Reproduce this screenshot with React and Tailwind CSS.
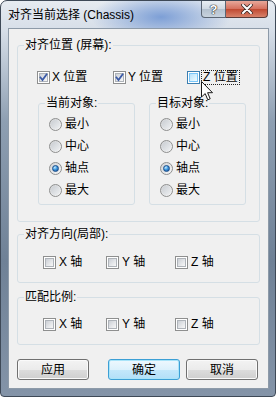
import React from 'react';

const FONT = "font-['Liberation_Sans','Noto_Sans_CJK_SC',sans-serif]";

function CheckBox({ checked, hot }) {
  const outer = hot ? 'border-[#3c7fb1]' : 'border-[#8e8f8f]';
  const inner = hot
    ? 'bg-[linear-gradient(135deg,#b9e2fb_0%,#d9f2fe_60%,#f0fbff_100%)] border-[#79c6f9]'
    : 'bg-[linear-gradient(135deg,#cbcfd5_0%,#e4e6e9_55%,#f7f7f7_100%)] border-[#aeb3b9]';
  return (
    <span className={`relative inline-flex h-[13px] w-[13px] shrink-0 items-center justify-center border ${outer} bg-white`}>
      <span className={`h-[9px] w-[9px] border ${inner}`} />
      {checked && (
        <svg className="absolute left-0 top-0" width="11" height="11" viewBox="0 0 11 11">
          <path d="M2.5 5.5 L4.5 8 L8.5 2.5" fill="none" stroke="#3b5aa6" strokeWidth="1.8" strokeLinecap="square" />
        </svg>
      )}
    </span>
  );
}

function Radio({ checked }) {
  return (
    <span className="inline-flex h-[13px] w-[13px] shrink-0 items-center justify-center rounded-full border border-[#8e8f8f] bg-[linear-gradient(135deg,#d0d2d5,#f8f8f8)]">
      {checked ? (
        <span className="h-[7px] w-[7px] rounded-full border border-[#1b4e8a] bg-[radial-gradient(circle_at_35%_30%,#c6ecff_0%,#3d98e0_45%,#15468a_100%)]" />
      ) : (
        <span className="h-[9px] w-[9px] rounded-full bg-[linear-gradient(135deg,#c9cdd2,#eef0f2)]" />
      )}
    </span>
  );
}

function Group({ label, className, children }) {
  return (
    <div className={`relative rounded-[3px] border border-[#d5dfe5] ${className}`}>
      <span className="absolute left-[6px] top-[-8px] bg-[#f0f0f0] px-[1px] leading-[14px]">{label}</span>
      {children}
    </div>
  );
}

function AxisRow({ pt }) {
  const items = [['X', 'w-[63px]'], ['Y', 'w-[69px]'], ['Z', '']];
  return (
    <div className={`flex h-[15px] items-center pl-[25px] ${pt}`}>
      {items.map(([a, w]) => (
        <div key={a} className={`flex items-center gap-[3px] ${w}`}>
          <CheckBox />
          <span className="leading-[15px]">{a} 轴</span>
        </div>
      ))}
    </div>
  );
}

function RadioBox({ label }) {
  const opts = ['最小', '中心', '轴点', '最大'];
  return (
    <Group label={label} className="h-[102px] w-[97px] pl-[10px] pt-[9px]">
      {opts.map((o) => (
        <div key={o} className="flex h-[22px] items-center gap-[3px]">
          <Radio checked={o === '轴点'} />
          <span className="leading-[14px]">{o}</span>
        </div>
      ))}
    </Group>
  );
}

function Btn({ children, primary }) {
  const look = primary
    ? 'border-[#3c9fd5] bg-[linear-gradient(180deg,#eef8fe_0%,#dcf1fc_50%,#c4e8fb_51%,#b2dff8_100%)] shadow-[inset_0_0_0_1px_#a9e4f9]'
    : 'border-[#707070] bg-[linear-gradient(180deg,#f3f3f3_0%,#ebebeb_50%,#dddddd_51%,#cfcfcf_100%)] shadow-[inset_0_0_0_1px_#fafafa]';
  return (
    <div className={`flex h-[21px] w-[72px] items-center justify-center rounded-[3px] border ${look}`}>
      {children}
    </div>
  );
}

export default function App() {
  return (
    <div className={`${FONT} relative h-[397px] w-[276px] overflow-hidden rounded-t-[7px] rounded-b-[4px] border border-[#3e4957] text-[12px] text-black bg-[image:radial-gradient(70px_26px_at_160px_16px,#7d9fd6_0%,rgba(125,159,214,0)_100%),linear-gradient(180deg,#e6ebf1_0px,#d6dee8_30px,#8e9fb2_120px,#6f8196_260px,#8494a8_397px)]`}>
      {/* title bar */}
      <div className="flex h-[27px] items-start">
        <span className="ml-[7px] mt-[6px] leading-[16px] text-[12px]">对齐当前选择 (Chassis)</span>
        <div className="ml-auto mr-[7px] flex">
          <div className="flex h-[17px] w-[25px] items-center justify-center rounded-bl-[4px] border border-t-0 border-[#5b6674] bg-[linear-gradient(180deg,#e9eef3_0%,#cfd8e2_50%,#b3c0ce_51%,#c8d3de_100%)]">
            <span className="font-['Liberation_Sans',sans-serif] text-[13px] font-bold leading-[13px] text-white [text-shadow:0_0_1px_#222,0_0_1px_#222,0_0_1px_#222]">?</span>
          </div>
          <div className="flex h-[17px] w-[42px] items-center justify-center rounded-br-[4px] border border-l-0 border-t-0 border-[#5b3a36] bg-[linear-gradient(180deg,#e8a89a_0%,#d6715f_48%,#c04a32_52%,#d8826a_100%)]">
            <svg width="12" height="10" viewBox="0 0 12 10">
              <path d="M2 1 L10 9 M10 1 L2 9" stroke="#3a2a28" strokeWidth="3.6" strokeLinecap="round" />
              <path d="M2 1 L10 9 M10 1 L2 9" stroke="#ffffff" strokeWidth="2" strokeLinecap="round" />
            </svg>
          </div>
        </div>
      </div>

      {/* client area */}
      <div className="ml-[7px] h-[361px] w-[261px] border border-[#8d9aa8] bg-[#f0f0f0] pl-[8px] pt-[16px]">
        <Group label="对齐位置 (屏幕):" className="h-[177px] w-[243px]">
          <div className="flex h-[15px] items-center pl-[19px] pt-0 mt-[24px]">
            <div className="flex w-[76px] items-center gap-[2px]">
              <CheckBox checked />
              <span className="leading-[15px]">X 位置</span>
            </div>
            <div className="flex w-[74px] items-center gap-[2px]">
              <CheckBox checked />
              <span className="leading-[15px]">Y 位置</span>
            </div>
            <div className="flex items-center gap-[1px]">
              <CheckBox hot />
              <span className="border border-dotted border-[#222] px-[1px] leading-[13px]">Z 位置</span>
            </div>
          </div>
          <div className="mt-[18px] flex gap-[14px] pl-[20px]">
            <RadioBox label="当前对象:" />
            <RadioBox label="目标对象:" />
          </div>
        </Group>

        <Group label="对齐方向(局部):" className="mt-[12px] h-[49px] w-[243px]">
          <AxisRow pt="mt-[20px]" />
        </Group>

        <Group label="匹配比例:" className="mt-[14px] h-[48px] w-[243px]">
          <AxisRow pt="mt-[19px]" />
        </Group>

        <div className="mt-[14px] flex">
          <Btn>应用</Btn>
          <div className="ml-[19px]"><Btn primary>确定</Btn></div>
          <div className="ml-[6px]"><Btn>取消</Btn></div>
        </div>
      </div>

      {/* mouse pointer over the Z checkbox */}
      <svg className="absolute left-[200px] top-[80px]" width="14" height="21" viewBox="0 0 14 21">
        <path d="M0.5 0.5 L0.5 16 L4.2 12.6 L6.8 18.8 L9.2 17.8 L6.6 11.7 L11.5 11.7 Z" fill="#ffffff" stroke="#1a1a1a" strokeWidth="1" strokeLinejoin="round" />
      </svg>
    </div>
  );
}
